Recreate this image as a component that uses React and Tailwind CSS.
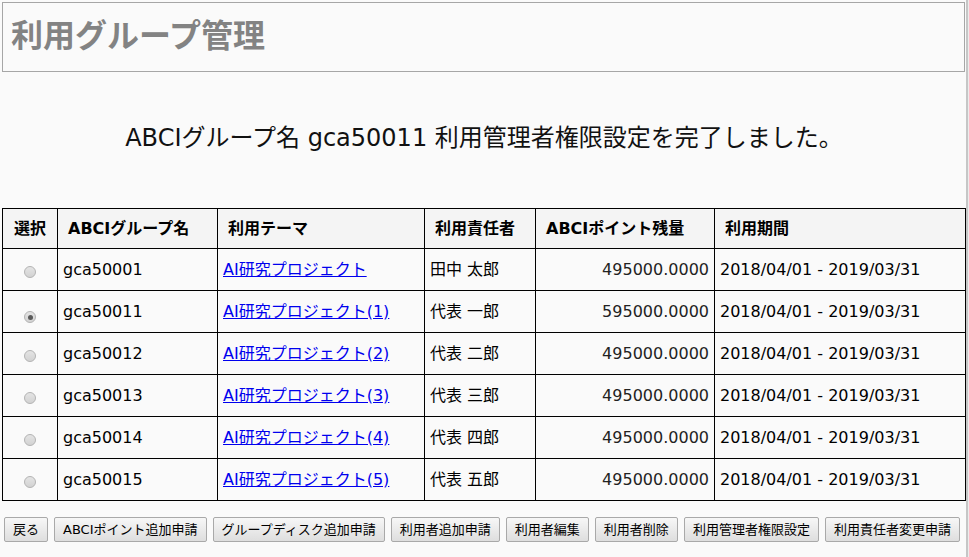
const rows = [
  { id: "gca50001", theme: "AI研究プロジェクト", owner: "田中 太郎", points: "495000.0000", checked: false },
  { id: "gca50011", theme: "AI研究プロジェクト(1)", owner: "代表 一郎", points: "595000.0000", checked: true },
  { id: "gca50012", theme: "AI研究プロジェクト(2)", owner: "代表 二郎", points: "495000.0000", checked: false },
  { id: "gca50013", theme: "AI研究プロジェクト(3)", owner: "代表 三郎", points: "495000.0000", checked: false },
  { id: "gca50014", theme: "AI研究プロジェクト(4)", owner: "代表 四郎", points: "495000.0000", checked: false },
  { id: "gca50015", theme: "AI研究プロジェクト(5)", owner: "代表 五郎", points: "495000.0000", checked: false },
];

const buttons = [
  "戻る",
  "ABCIポイント追加申請",
  "グループディスク追加申請",
  "利用者追加申請",
  "利用者編集",
  "利用者削除",
  "利用管理者権限設定",
  "利用責任者変更申請",
];

const Radio = ({ checked }) => (
  <span className="inline-flex w-[12px] h-[12px] translate-y-[3px] rounded-full border border-[#b4b4b4] bg-gradient-to-b from-[#e4e4e4] to-[#d2d2d2] items-center justify-center">
    {checked && <span className="w-[5px] h-[5px] rounded-full bg-[#5a5a5a]" />}
  </span>
);

const th = "border border-black text-left font-bold text-[16px] pl-[10px] h-[40px]";
const td = "border border-black h-[42px] px-[5px] text-[16px]";

export default function App() {
  return (
    <div
      className="w-[969px] h-[557px] bg-[#fafafa] flex overflow-hidden text-black"
      style={{ fontFamily: '"DejaVu Sans", "Noto Sans CJK JP", sans-serif' }}
    >
      <div className="w-[966px] pt-[2px] pl-[2px]">
        {/* ページ見出し */}
        <div className="w-[963px] h-[70px] border border-[#a6a6a6] flex items-center pl-[8px] pb-[3px]">
          <h1 className="text-[32px] leading-none font-bold text-[#838383]">利用グループ管理</h1>
        </div>

        {/* 完了メッセージ */}
        <div className="h-[136px] flex items-center justify-center pb-[4px]">
          <p className="text-[24px] text-[#111]">
            ABCIグループ名 gca50011 利用管理者権限設定を完了しました。
          </p>
        </div>

        {/* グループ一覧 */}
        <table className="w-[963px] border-collapse table-fixed">
          <colgroup>
            <col className="w-[55px]" />
            <col className="w-[160px]" />
            <col className="w-[207px]" />
            <col className="w-[111px]" />
            <col className="w-[179px]" />
            <col className="w-[251px]" />
          </colgroup>
          <thead>
            <tr className="bg-[#f4f4f4]">
              <th className="border border-black font-bold text-[16px] h-[40px] text-center">選択</th>
              <th className={th}>ABCIグループ名</th>
              <th className={th}>利用テーマ</th>
              <th className={th}>利用責任者</th>
              <th className={th}>ABCIポイント残量</th>
              <th className={th}>利用期間</th>
            </tr>
          </thead>
          <tbody>
            {rows.map((r) => (
              <tr key={r.id} className="bg-[#fafafa]">
                <td className="border border-black h-[42px] text-center">
                  <Radio checked={r.checked} />
                </td>
                <td className={td}>{r.id}</td>
                <td className={td}>
                  <a href="#" className="text-[#0000ee] underline">{r.theme}</a>
                </td>
                <td className={td}>{r.owner}</td>
                <td className={`${td} text-right text-[#222]`}>{r.points}</td>
                <td className={td}>2018/04/01 - 2019/03/31</td>
              </tr>
            ))}
          </tbody>
        </table>

        {/* 操作ボタン */}
        <div className="flex gap-[6px] mt-[16px] ml-[2px]">
          {buttons.map((b) => (
            <button
              key={b}
              className="h-[25px] px-[8px] text-[13px] leading-none border border-[#a9a9a9] rounded-[2px] bg-gradient-to-b from-[#f7f7f7] to-[#dedede] text-black whitespace-nowrap"
            >
              {b}
            </button>
          ))}
        </div>
      </div>
      <div className="w-[3px] h-full border-l-2 border-[#c6c6c6] bg-[#ececec]" />
    </div>
  );
}
